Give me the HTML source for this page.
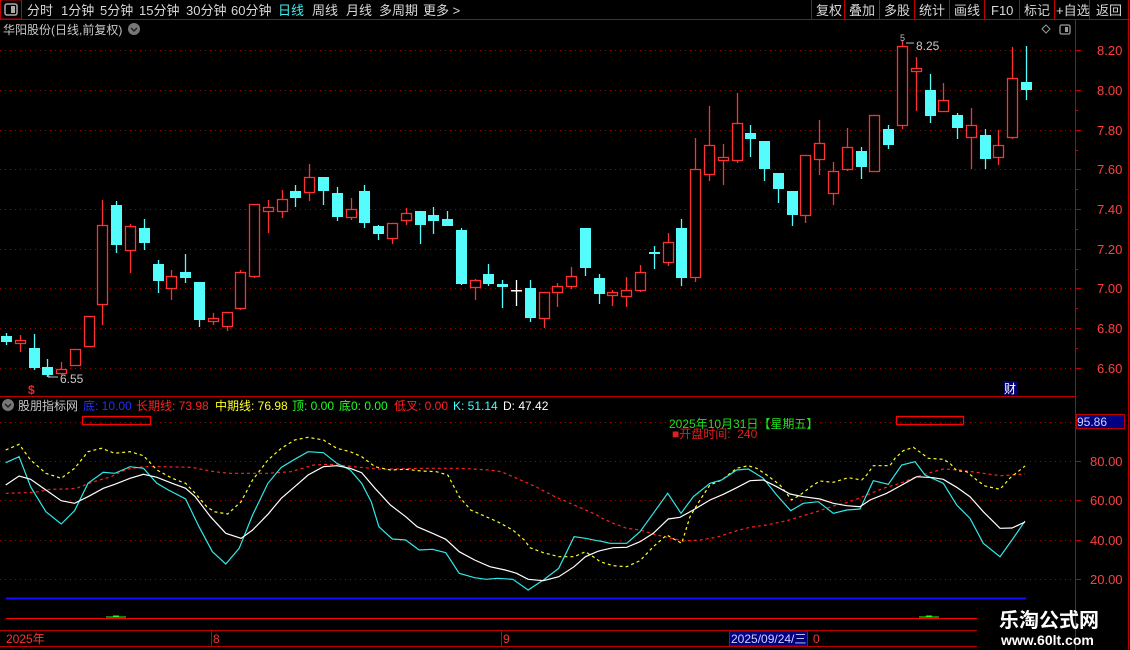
<!DOCTYPE html>
<html><head><meta charset="utf-8">
<style>
html,body{margin:0;padding:0;background:#000;width:1130px;height:650px;overflow:hidden}
svg{display:block}
text{font-family:"Liberation Sans","Noto Sans CJK SC",sans-serif;}
</style></head><body>
<svg id="s" width="1130" height="650" xmlns="http://www.w3.org/2000/svg">
<rect width="1130" height="650" fill="#000"/>
<line x1="0" y1="19.5" x2="1130" y2="19.5" stroke="#c00000"/>
<rect x="0.5" y="0" width="21" height="19" fill="none" stroke="#c00000"/>
<rect x="5" y="4" width="12" height="11" rx="2" fill="none" stroke="#aaa" stroke-width="1.5"/>
<rect x="11" y="6" width="4" height="7" fill="#aaa"/>
<g font-size="13" fill="#d8d8d8">
<text x="27" y="15">分时</text><text x="61" y="15">1分钟</text><text x="100" y="15">5分钟</text>
<text x="139" y="15">15分钟</text><text x="186" y="15">30分钟</text><text x="231" y="15">60分钟</text>
<text x="278" y="15" fill="#40f0f0">日线</text><text x="312" y="15">周线</text><text x="346" y="15">月线</text>
<text x="379" y="15">多周期</text><text x="423" y="15">更多 &gt;</text>
<text x="816" y="15">复权</text><text x="849" y="15">叠加</text><text x="884" y="15">多股</text>
<text x="919" y="15">统计</text><text x="954" y="15">画线</text><text x="991" y="15">F10</text>
<text x="1024" y="15">标记</text><text x="1056" y="15">+自选</text><text x="1096" y="15">返回</text>
</g>
<g stroke="#c00000">
<line x1="811.5" y1="0" x2="811.5" y2="19"/><line x1="844.5" y1="0" x2="844.5" y2="19"/>
<line x1="879.5" y1="0" x2="879.5" y2="19"/><line x1="914.5" y1="0" x2="914.5" y2="19"/>
<line x1="949.5" y1="0" x2="949.5" y2="19"/><line x1="984.5" y1="0" x2="984.5" y2="19"/>
<line x1="1019.5" y1="0" x2="1019.5" y2="19"/><line x1="1054.5" y1="0" x2="1054.5" y2="19"/>
<line x1="1089.5" y1="0" x2="1089.5" y2="19"/>
<line x1="1128.5" y1="0" x2="1128.5" y2="19"/>
</g>
<text x="3" y="34" font-size="12" fill="#c8c8c8">华阳股份(日线,前复权)</text>
<circle cx="134" cy="29" r="6" fill="#777"/><path d="M131 28l3 3 3-3" stroke="#222" stroke-width="1.5" fill="none"/>
<path d="M1046 25l4 4-4 4-4-4z" fill="none" stroke="#999"/>
<rect x="1060" y="25" width="10" height="9" rx="1.5" fill="none" stroke="#999" stroke-width="1.3"/><rect x="1065" y="27" width="3" height="5" fill="#999"/>
<line x1="1075.5" y1="20" x2="1075.5" y2="650" stroke="#c00000"/>
<line x1="1128.5" y1="20" x2="1128.5" y2="650" stroke="#c00000"/>
<line x1="0" y1="396.5" x2="1075" y2="396.5" stroke="#c00000"/>
<g id="grid"></g>
<g font-size="13" fill="#ff4040" id="plab"></g>
<g id="candles"></g>
<g id="lines"></g>
<text x="900" y="41" font-size="9" fill="#bbb">5</text>
<path d="M906 43h8" stroke="#bbb"/><text x="916" y="50" font-size="12" fill="#c8c8c8">8.25</text>
<path d="M48 375l2 2M48 377h10" stroke="#bbb"/><text x="60" y="383" font-size="12" fill="#c8c8c8">6.55</text>
<text x="28" y="394" font-size="12" fill="#ff2020" font-weight="bold">$</text>
<rect x="1004" y="381" width="14" height="14" fill="#000070"/><text x="1004" y="393" font-size="12" fill="#fff">财</text>
<circle cx="8" cy="405" r="6" fill="#777"/><path d="M5 404l3 3 3-3" stroke="#222" stroke-width="1.5" fill="none"/>
<g font-size="12">
<text x="18" y="410" fill="#c8c8c8">股朋指标网</text>
<text x="83" y="410" fill="#2030ff">底: 10.00</text>
<text x="136" y="410" fill="#ff2020">长期线: 73.98</text>
<text x="215" y="410" fill="#ffff20">中期线: 76.98</text>
<text x="292" y="410" fill="#20ff20">顶: 0.00</text>
<text x="339" y="410" fill="#20ff20">底0: 0.00</text>
<text x="394" y="410" fill="#ff2020">低叉: 0.00</text>
<text x="453" y="410" fill="#40ffff">K: 51.14</text>
<text x="503" y="410" fill="#fff">D: 47.42</text>
<text x="669" y="428" fill="#20e020">2025年10月31日【星期五】</text>
<text x="672" y="438" fill="#e02020">■开盘时间:&#160;&#160;240</text>
</g>
<rect x="82.5" y="416.5" width="68" height="8" fill="none" stroke="#ff0000" stroke-width="1.3"/>
<rect x="896.5" y="416.5" width="67" height="8" fill="none" stroke="#ff0000" stroke-width="1.3"/>
<rect x="1076.5" y="414.5" width="48" height="14" fill="#000080" stroke="#c00000"/>
<text x="1077" y="426" font-size="12" fill="#d0d0ff">95.86</text>
<line x1="6" y1="598.5" x2="1026" y2="598.5" stroke="#1010ff" stroke-width="2"/>
<line x1="6" y1="618.5" x2="977" y2="618.5" stroke="#ff0000"/>
<path d="M106 617h20M113 616h6" stroke="#20ff20"/><path d="M919 617h20M926 616h6" stroke="#20ff20"/>
<line x1="0" y1="630.5" x2="977" y2="630.5" stroke="#c00000"/>
<line x1="0" y1="646.5" x2="977" y2="646.5" stroke="#c00000"/>
<line x1="211.5" y1="630" x2="211.5" y2="646" stroke="#c00000"/>
<line x1="501.5" y1="630" x2="501.5" y2="646" stroke="#c00000"/>
<g font-size="12" fill="#ff3030">
<text x="6" y="643">2025年</text><text x="213" y="643">8</text><text x="503" y="643">9</text><text x="813" y="643">0</text>
</g>
<rect x="729.5" y="631" width="78" height="15" fill="#000080" stroke="#c00000"/>
<text x="731" y="643" font-size="12" fill="#d0d0ff">2025/09/24/三</text>
<text x="999" y="627" font-size="20" font-weight="bold" fill="#fff" font-family="'Noto Serif CJK SC','Liberation Serif',serif">乐淘公式网</text>
<text x="1001" y="645" font-size="14" font-weight="bold" fill="#fff" font-family="'Liberation Serif',serif">www.60lt.com</text>
</svg>
<script>
var NS="http://www.w3.org/2000/svg";
function el(p,t,a){var e=document.createElementNS(NS,t);for(var k in a)e.setAttribute(k,a[k]);document.getElementById(p).appendChild(e);return e;}
var prices=[["8.20",50],["8.00",90],["7.80",130],["7.60",169],["7.40",209],["7.20",249],["7.00",288],["6.80",328],["6.60",368]];
prices.forEach(function(p){el("grid","line",{x1:0,y1:p[1]+.5,x2:1075,y2:p[1]+.5,stroke:"#a00000","stroke-dasharray":"1 4"});
el("grid","line",{x1:1075,y1:p[1]+.5,x2:1081,y2:p[1]+.5,stroke:"#c00000"});
var t=el("plab","text",{x:1097,y:p[1]+5});t.textContent=p[0];});
[110,150,189,229,269,308,348].forEach(function(y){el("grid","line",{x1:1075,y1:y+.5,x2:1078,y2:y+.5,stroke:"#c00000"});});
var ind=[["",422],["80.00",461],["60.00",500],["40.00",540],["20.00",579]];
ind.forEach(function(p){el("grid","line",{x1:0,y1:p[1]+.5,x2:1075,y2:p[1]+.5,stroke:"#a00000","stroke-dasharray":"1 4"});
if(p[0]){el("grid","line",{x1:1075,y1:p[1]+.5,x2:1081,y2:p[1]+.5,stroke:"#c00000"});var t=el("plab","text",{x:1090,y:p[1]+5});t.textContent=p[0];}});
var C=[["c",336,342,333,345],["r",340,343,335,352],["c",348,368,334,370],["c",367,375,359,377],["r",369,373,362,375],
["r",349,365,349,365],["r",316,346,316,346],["r",225,304,200,325],["c",205,245,201,253],["r",226,250,224,273],
["c",228,243,219,250],["c",264,281,260,293],["r",276,288,270,300],["c",272,278,254,283],["c",282,320,282,327],
["r",318,321,313,325],["r",312,326,312,331],["r",272,308,270,310],["r",204,276,204,278],["r",207,211,200,233],
["r",199,211,190,218],["c",191,198,185,207],["r",177,192,164,201],["c",177,191,177,205],["c",193,217,187,221],
["r",209,217,198,220],["c",191,223,185,228],["c",226,234,225,240],["r",223,238,223,244],["r",213,220,208,225],
["c",211,225,211,244],["c",215,221,207,234],["c",219,226,211,226],["c",230,284,228,285],["r",280,287,279,300],
["c",274,284,264,286],["c",284,287,280,308],["w",290,291,280,306],["c",288,318,280,322],["r",292,318,292,328],
["r",286,292,283,307],["r",276,286,267,289],["c",228,268,228,276],["c",278,294,274,304],["r",292,295,290,306],
["r",290,296,277,307],["r",272,290,265,292],["c",252,254,246,269],["r",242,262,233,266],["c",228,278,219,286],
["r",169,277,138,282],["r",145,174,106,181],["r",157,160,144,185],["r",123,160,93,163],["c",133,139,125,157],
["c",141,169,141,181],["c",173,189,173,203],["c",191,215,191,226],["r",155,215,155,223],["r",143,159,120,175],
["r",171,193,162,205],["r",147,169,128,171],["c",151,167,147,179],["r",115,171,115,171],["c",129,145,125,149],
["r",46,125,40,129],["r",68,71,57,111],["c",90,116,74,123],["r",100,111,83,112],["c",115,128,113,139],
["r",125,137,108,169],["c",135,159,129,169],["r",145,157,130,165],["r",78,137,47,139],["c",82,90,46,100]];
var n=C.length;
C.forEach(function(c,i){var x=Math.round(6+i*(1020/(n-1)));
var col=c[0]=="c"?"#54fcfc":(c[0]=="w"?"#fff":"#ff3030");
el("candles","line",{x1:x+.5,y1:c[3],x2:x+.5,y2:c[4],stroke:col,"stroke-width":1.3});
if(c[0]=="r"){el("candles","rect",{x:x-4.5,y:c[1]+.5,width:10,height:Math.max(1,c[2]-c[1]),fill:"#000",stroke:col,"stroke-width":1.3});}
else{el("candles","rect",{x:x-5,y:c[1],width:11,height:Math.max(1.5,c[2]-c[1]),fill:col});}
});
function conv(a,sx,ox,sy,oy){var r=[];for(var i=0;i<a.length;i+=2)r.push([ox+a[i]/sx,oy+a[i+1]/sy]);return r;}
var L={
cy:[conv([15,128,50,110,80,200,120,275,160,312,195,272,230,190,270,157,300,160,340,140,375,145,410,190,440,210,485,237,520,320,555,395,590,432,625,385,660,285,700,190,735,142,770,118,805,95,845,98,880,130,915,150,945,190,970,245,990,320,1025,357,1060,360,1095,390,1130,388,1165,398,1200,460,1240,473,1270,478,1300,475,1340,478,1380,510,1420,480,1460,445,1500,350,1530,355,1560,362],2.613,0,3,420),
conv([0,423,30,430,80,430,120,395,160,340,203,280,243,340,280,290,330,250,365,240,410,210,445,207,490,235,530,285,572,332,610,310,655,305,700,340,740,330,780,327,820,242,865,253,905,195,945,185,975,225,1030,250,1070,315,1110,355,1150,430,1200,470],3,600,3,400),[[1012,540],[1025,521]]],
wh:[conv([15,195,50,168,80,178,120,210,160,242,195,250,230,230,270,205,300,193,340,175,375,163,410,172,450,190,485,205,510,230,550,290,590,340,630,355,660,330,700,283,735,235,770,200,805,165,845,140,880,137,915,145,945,158,980,205,1020,255,1060,290,1090,320,1130,340,1165,358,1200,395,1240,420,1280,440,1320,450,1350,460,1380,478,1420,482,1460,470,1500,440,1530,410,1560,395],2.613,0,3,420),
conv([0,452,40,443,80,442,120,425,160,400,205,357,240,352,280,330,330,300,370,283,410,263,450,242,490,240,530,260,570,282,610,290,660,297,700,310,740,317,780,320,810,300,860,280,900,258,950,230,1000,233,1030,238,1070,262,1110,290,1150,335,1200,385],3,600,3,400),[[1012,528],[1025,522]]],
ye:[conv([15,90,50,73,80,120,120,160,160,175,195,145,230,95,265,85,300,100,340,95,375,107,410,150,450,175,485,190,510,220,540,260,560,275,595,282,630,245,660,180,700,120,735,85,770,60,805,52,845,60,880,85,915,95,945,110,980,140,1020,150,1060,148,1100,153,1140,155,1170,165,1200,230,1230,270,1270,290,1300,305,1340,330,1370,360,1385,383,1420,398,1460,410,1500,410,1530,395,1560,418],2.613,0,3,420),
conv([0,485,40,497,80,500,120,482,160,440,200,405,245,430,270,350,300,300,330,255,365,240,410,205,445,197,470,205,500,225,540,255,575,300,600,285,640,255,660,243,700,247,745,233,785,240,800,225,820,197,870,197,885,175,910,152,940,142,965,160,985,175,1030,178,1050,190,1070,212,1100,215,1130,240,1155,258,1200,268],3,600,3,400),[[1010,478],[1025,466]]],
rd:[conv([15,220,70,218,100,215,130,208,175,207,200,205,240,187,290,170,330,148,375,140,420,140,500,142,560,155,600,160,700,160,760,155,820,135,860,133,900,137,940,142,1000,148,1100,145,1200,145,1280,150,1310,155,1350,175,1400,200,1450,230,1500,255,1560,285],2.613,0,3,420),
conv([0,352,40,370,80,385,120,390,160,402,200,412,250,423,300,420,350,412,400,395,450,382,500,375,560,362,600,350,650,335,700,318,750,305,800,285,850,265,900,250,950,230,990,218,1030,207,1080,210,1130,217,1200,227],3,600,3,400),[[1012,475],[1025,474]]]};
var st={rd:["#ff2020","3 3"],ye:["#ffff20","3 3"],cy:["#30e8e8",""],wh:["#ffffff",""]};
["rd","ye","cy","wh"].forEach(function(k){var pts=[].concat(L[k][0],L[k][1],L[k][2]);
var d="M"+pts.map(function(p){return p[0].toFixed(1)+" "+p[1].toFixed(1);}).join(" L");
var a={d:d,fill:"none",stroke:st[k][0],"stroke-width":1.2};if(st[k][1])a["stroke-dasharray"]=st[k][1];el("lines","path",a);});
</script>
</body></html>
